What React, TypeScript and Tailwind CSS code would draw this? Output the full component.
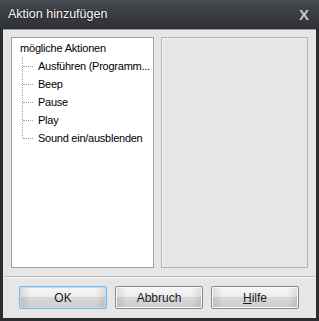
import React from "react";

const font = { fontFamily: "'Liberation Sans', Arial, sans-serif" };

function Btn({ label, focused }: { label: React.ReactNode; focused?: boolean }) {
  return (
    <div
      className={
        "w-[88px] h-[23px] rounded-[2px] border flex items-center justify-center text-[12px] text-[#1a1a1a] " +
        (focused ? "border-[#74b8e6]" : "border-[#8a8a8a]")
      }
      style={{
        background:
          "linear-gradient(to right, rgba(0,0,0,0.10) 0%, rgba(0,0,0,0) 12%, rgba(0,0,0,0) 88%, rgba(0,0,0,0.10) 100%), linear-gradient(to bottom, #f6f6f6 0%, #eeeeee 45%, #d8d8d8 50%, #cdcdcd 100%)",
        boxShadow: focused ? "inset 0 0 0 1px #b9def6" : "inset 0 0 0 1px #f8f8f8",
      }}
    >
      {label}
    </div>
  );
}

export default function App() {
  const items = ["Ausführen (Programm...", "Beep", "Pause", "Play", "Sound ein/ausblenden"];
  return (
    <div className="w-[319px] h-[321px] bg-[#2b2d31] flex flex-col" style={font}>
      <div
        className="h-[29px] flex items-center justify-between pl-[8px] pr-[10px]"
        style={{ background: "linear-gradient(to bottom, #4a4d53 0%, #3b3e43 40%, #2e3034 100%)" }}
      >
        <span className="text-white text-[12.5px] leading-none" style={{ textShadow: "0 0 2px #000" }}>
          Aktion hinzufügen
        </span>
        <span className="text-[#c8c8c8] text-[15px] font-bold leading-none">X</span>
      </div>
      <div className="flex-1 mx-[3px] mb-[3px] bg-[#e6e6e6] flex flex-col border-t border-[#9a9a9a]">
        <div className="flex gap-[7px] pl-[8px] pr-[8px] pt-[7px]">
          <div className="w-[143px] h-[231px] bg-white border border-[#a0a0a0] relative">
            <div className="absolute left-[8px] top-[1px] text-[11px] tracking-[-0.2px] text-black leading-[18px]">
              mögliche Aktionen
            </div>
            <div className="absolute left-[10px] top-[19px] w-0 h-[81px] border-l border-dotted border-[#a0a0a0]" />
            {items.map((t, i) => (
              <React.Fragment key={t}>
                <div
                  className="absolute left-[11px] w-[10px] h-0 border-t border-dotted border-[#a0a0a0]"
                  style={{ top: 28 + i * 18 }}
                />
                <div
                  className="absolute left-[26px] text-[11px] tracking-[-0.25px] text-black leading-[18px] whitespace-nowrap"
                  style={{ top: 19 + i * 18 }}
                >
                  {t}
                </div>
              </React.Fragment>
            ))}
          </div>
          <div className="w-[148px] h-[231px] border border-[#b4b4b4] bg-[#e6e6e6]" style={{ boxShadow: "inset 1px 1px 0 #f4f4f4" }} />
        </div>
        <div className="mt-[8px] mx-[1px] h-[2px] border-t border-[#bcbcbc] border-b border-b-[#f6f6f6]" />
        <div className="flex gap-[8px] pl-[16px] mt-[8px]">
          <Btn label="OK" focused />
          <Btn label="Abbruch" />
          <Btn label={<span><span className="underline">H</span>ilfe</span>} />
        </div>
      </div>
    </div>
  );
}
